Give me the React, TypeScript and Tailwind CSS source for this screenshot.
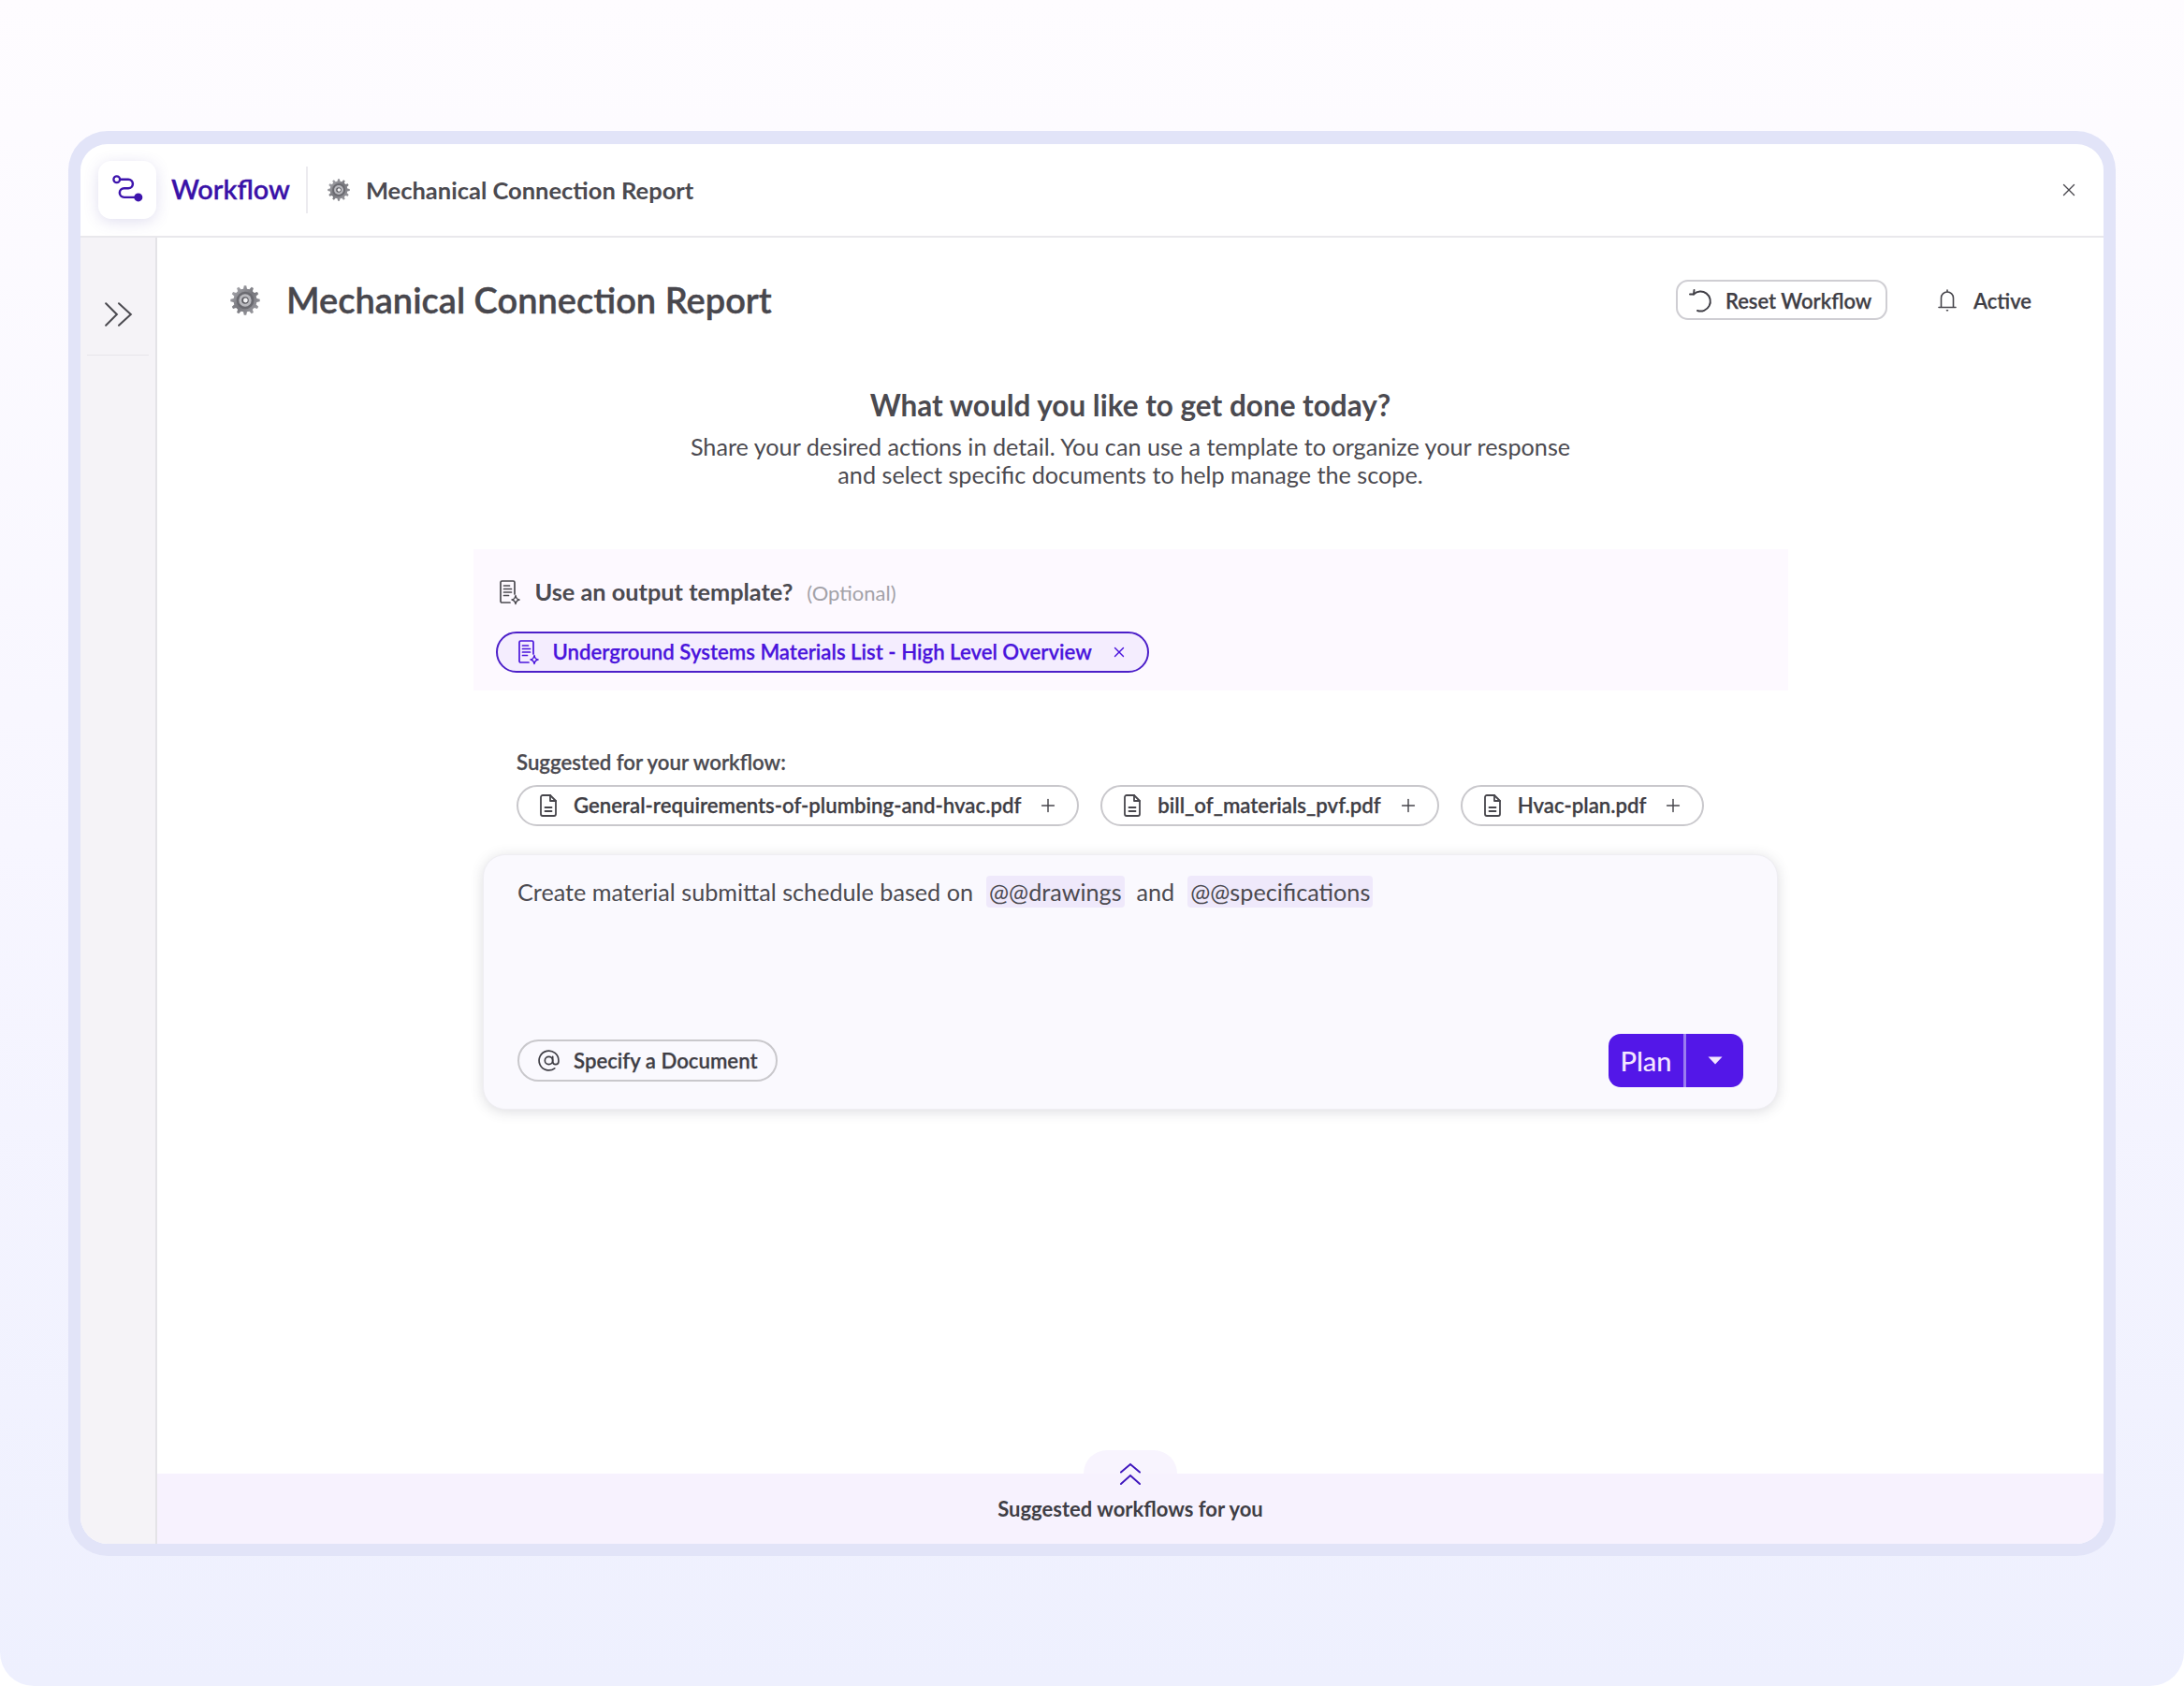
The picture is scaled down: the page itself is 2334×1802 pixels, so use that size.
import { AtSign, Plus, X } from "lucide-react";

// gear outline with 12 teeth, computed once
const gearPath = (() => {
    const pts: string[] = [];
    const teeth = 12;
    for (let i = 0; i < teeth; i++) {
        const a = (i / teeth) * Math.PI * 2;
        const step = (Math.PI * 2) / teeth;
        const corners: [number, number][] = [
            [9.4, a - step * 0.3],
            [11.8, a - step * 0.15],
            [11.8, a + step * 0.15],
            [9.4, a + step * 0.3],
        ];
        corners.forEach(([r, t]) => {
            pts.push(`${(12 + r * Math.cos(t)).toFixed(2)} ${(12 + r * Math.sin(t)).toFixed(2)}`);
        });
    }
    return "M" + pts.join("L") + "Z";
})();

function Gear({ className }: { className: string }) {
    return (
        <svg viewBox="0 0 24 24" className={className}>
            <defs>
                <linearGradient id="gearFill" x1="0" y1="0" x2="1" y2="1">
                    <stop offset="0" stopColor="#b4b4b9" />
                    <stop offset="0.5" stopColor="#77777d" />
                    <stop offset="1" stopColor="#a5a5aa" />
                </linearGradient>
            </defs>
            <path d={gearPath} fill="url(#gearFill)" />
            <circle cx="12" cy="12" r="7" fill="#6a6a70" />
            <circle cx="12" cy="12" r="5" fill="#b9b9be" />
            <circle cx="12" cy="12" r="2.800" fill="#5c5c62" />
            <circle cx="12.300" cy="12" r="1.800" fill="#f4f4f6" />
        </svg>
    );
}

function TemplateIcon({ className }: { className: string }) {
    return (
        <svg viewBox="0 0 24 28" fill="none" stroke="currentColor" strokeWidth="1.7" className={className}>
            <path d="M12 25H3.500A1.500 1.500 0 0 1 2 23.500V3.500A1.500 1.500 0 0 1 3.500 2h12A1.500 1.500 0 0 1 17 3.500V16" strokeLinecap="round" />
            <path d="M5.500 7h6M5.500 10.500h8M5.500 14h8M5.500 17.500h5" strokeLinecap="round" />
            <path d="M18 17.500c.5 3 1.500 4 4 4.500-2.500.5-3.500 1.500-4 4.500-.5-3-1.500-4-4-4.500 2.500-.5 3.500-1.500 4-4.500Z" strokeLinejoin="round" strokeWidth="1.500" />
        </svg>
    );
}

function DocIcon() {
    return (
        <svg viewBox="0 0 20 26" fill="none" stroke="#47464c" strokeWidth="1.800" strokeLinecap="round" strokeLinejoin="round" className="h-[26px] w-[20px] shrink-0">
            <path d="M12 2H4a2 2 0 0 0-2 2v18a2 2 0 0 0 2 2h12a2 2 0 0 0 2-2V8Z" />
            <path d="M12 2v6h6M6.500 15h7M6.500 19h7" />
        </svg>
    );
}

function DocChip({ name }: { name: string }) {
    return (
        <div className="flex h-[44px] items-center rounded-full border-2 border-[#c9c8cc] bg-white pl-[22px] pr-[20px] text-[22.200px] font-semibold text-[#3f3e45] [-webkit-text-stroke:0.25px_currentColor]">
            <DocIcon />
            <span className="ml-[17px]">{name}</span>
            <Plus className="ml-[18px] h-[22px] w-[22px] shrink-0 text-[#47464c]" strokeWidth={1.6} />
        </div>
    );
}

export default function App() {
    return (
        <div
            className="h-[1802px] w-[2334px] overflow-hidden rounded-b-[36px] bg-gradient-to-b from-[#fefcff] via-[#f7f6ff] to-[#eef0fe] px-[73px] pt-[140px]"
            style={{ fontFamily: "Lato, 'Noto Sans', sans-serif" }}
        >
            {/* frame */}
            <div className="flex h-[1523px] w-[2188px] flex-col overflow-hidden rounded-[42px] border-[13px] border-t-[14px] border-[#e2e4f8] bg-white">
                {/* top bar */}
                <header className="flex h-[100px] shrink-0 items-center border-b-2 border-[#e9e8ec] pl-[19px] pr-[26px]">
                    <div className="flex h-[62px] w-[62px] shrink-0 items-center justify-center rounded-[14px] bg-white shadow-[0_3px_16px_rgba(90,80,170,0.18)]">
                        <svg viewBox="0 0 32 32" fill="none" className="h-[36px] w-[36px] text-[#3d14ad]">
                            <circle cx="6" cy="6" r="3" stroke="currentColor" strokeWidth="2" />
                            <path d="M9 6h8a4.200 4.200 0 0 1 0 8.500h-4a4.200 4.200 0 0 0 0 8.500h11" stroke="currentColor" strokeWidth="2.200" />
                            <circle cx="26.500" cy="23" r="4" fill="currentColor" />
                        </svg>
                    </div>
                    <span className="ml-[16px] text-[28.800px] font-semibold text-[#3a12a8] [-webkit-text-stroke:0.3px_currentColor]">Workflow</span>
                    <div className="ml-[17px] h-[50px] w-[2px] bg-[#ecebef]" />
                    <Gear className="ml-[21px] h-[24px] w-[24px]" />
                    <span className="ml-[17px] text-[25.500px] font-bold text-[#4b4a50]">Mechanical Connection Report</span>
                    <X className="ml-auto h-[22px] w-[22px] text-[#4b4a50]" strokeWidth={1.5} />
                </header>

                <div className="flex min-h-0 flex-1">
                    {/* collapsed sidebar */}
                    <aside className="w-[80px] shrink-0 bg-[#f5f3f7] px-[7px] pt-[68px]">
                        <svg viewBox="0 0 30 26" fill="none" stroke="#4b4a50" strokeWidth="1.900" strokeLinecap="round" className="ml-[18px] h-[28px] w-[32px]">
                            <path d="M2 2l11 11L2 24M15 2l12 11-12 11" />
                        </svg>
                        <div className="mt-[29px] h-px bg-[#e7e5ea]" />
                    </aside>
                    <div className="w-[2px] shrink-0 bg-[#e4e3e7]" />

                    <main className="flex min-w-0 flex-1 flex-col">
                        {/* page title row */}
                        <div className="mt-[45px] flex h-[43px] items-center pl-[78px] pr-[77px]">
                            <Gear className="h-[32px] w-[32px]" />
                            <h1 className="ml-[28px] text-[38px] font-semibold text-[#48474d] [-webkit-text-stroke:0.4px_currentColor]">Mechanical Connection Report</h1>
                            <button className="ml-auto flex h-[43px] w-[226px] items-center rounded-[13px] border-2 border-[#cfced3] bg-white pl-[11px] text-[22px] font-semibold text-[#3f3e45] [-webkit-text-stroke:0.25px_currentColor]">
                                <svg viewBox="0 0 28 28" fill="none" stroke="currentColor" strokeWidth="1.900" strokeLinecap="round" strokeLinejoin="round" className="h-[28px] w-[28px]">
                                    <path d="M6 7.500A10.500 10.500 0 1 1 10 25" />
                                    <path d="M2 7.500 6 7.500 6.500 3" />
                                </svg>
                                <span className="ml-[12px] pt-[2px]">Reset Workflow</span>
                            </button>
                            <svg viewBox="0 0 20 24" fill="none" stroke="#47464c" strokeWidth="1.600" strokeLinecap="round" className="ml-[54px] h-[24px] w-[20px]">
                                <path d="M1 19.500h18M3.500 19.500V9.500a6.500 6.500 0 0 1 13 0v10M10 1v2M9.500 22.800h1" />
                            </svg>
                            <span className="ml-[18px] pt-[2px] text-[22px] font-semibold text-[#3f3e45] [-webkit-text-stroke:0.25px_currentColor]">Active</span>
                        </div>

                        {/* intro */}
                        <div className="mt-[71px] flex flex-col items-center text-center">
                            <h2 className="text-[31.500px] leading-[40px] font-bold text-[#4b4a50]">What would you like to get done today?</h2>
                            <p className="mt-[9px] text-[25.200px] leading-[30px] text-[#4b4a50]">
                                Share your desired actions in detail. You can use a template to organize your response
                                <br />
                                and select specific documents to help manage the scope.
                            </p>
                        </div>

                        {/* output template */}
                        <section className="mx-auto mt-[65px] h-[151px] w-[1405px] shrink-0 bg-[#fdf9ff] pl-[24px] pt-[29px]">
                            <div className="flex h-[34px] items-center pl-[3px]">
                                <TemplateIcon className="h-[28px] w-[24px] shrink-0 text-[#4b4a50]" />
                                <span className="ml-[15px] text-[25.300px] font-bold text-[#4b4a50]">Use an output template?</span>
                                <span className="ml-[15px] text-[22px] text-[#a3a2a8]">(Optional)</span>
                            </div>
                            <div className="mt-[25px] flex h-[44px] w-[698px] items-center rounded-full border-2 border-[#4c1fc9] bg-[#f4edfe] pl-[21px] text-[#4a14dc]">
                                <TemplateIcon className="h-[28px] w-[24px] shrink-0" />
                                <span className="ml-[14px] text-[22.200px] font-semibold whitespace-nowrap [-webkit-text-stroke:0.25px_currentColor]">Underground Systems Materials List - High Level Overview</span>
                                <X className="ml-[20px] h-[18px] w-[18px] shrink-0" strokeWidth={1.8} />
                            </div>
                        </section>

                        {/* suggestions + prompt */}
                        <div className="mx-auto w-[1384px]">
                            <div className="mt-[63px] px-[36px]">
                                <p className="text-[22.200px] leading-[28px] font-semibold text-[#4b4a50] [-webkit-text-stroke:0.25px_currentColor]">Suggested for your workflow:</p>
                                <div className="mt-[10px] flex gap-[23px]">
                                    <DocChip name="General-requirements-of-plumbing-and-hvac.pdf" />
                                    <DocChip name="bill_of_materials_pvf.pdf" />
                                    <DocChip name="Hvac-plan.pdf" />
                                </div>
                            </div>
                            <div className="mt-[30px] flex h-[273px] flex-col rounded-[24px] border border-[#efeef3] bg-[#faf9fe] px-[36px] pt-[22px] pb-[23px] shadow-[0_2px_14px_rgba(60,60,80,0.18)]">
                                <div className="flex items-center text-[25.200px] leading-[34px] text-[#4b4a50]">
                                    <span>Create material submittal schedule based on</span>
                                    <span className="ml-[14px] rounded-[4px] bg-[#efe9fb] px-[3px]">@@drawings</span>
                                    <span className="ml-[13px]">and</span>
                                    <span className="ml-[14px] rounded-[4px] bg-[#efe9fb] px-[3px]">@@specifications</span>
                                </div>
                                <div className="mt-auto flex items-end justify-between">
                                    <button className="mb-[6px] flex h-[45px] w-[278px] items-center rounded-full border-2 border-[#c9c8cc] pl-[19px] text-[22.200px] font-semibold text-[#3f3e45] [-webkit-text-stroke:0.25px_currentColor]">
                                        <AtSign className="h-[25px] w-[25px]" strokeWidth={1.6} />
                                        <span className="ml-[14px]">Specify a Document</span>
                                    </button>
                                    <div className="flex h-[57px] w-[144px] overflow-hidden rounded-[13px] bg-[#5317e8] text-[#f3e6ff]">
                                        <span className="flex w-[80px] items-center justify-center text-[29px] font-medium">Plan</span>
                                        <span className="w-[3px] bg-[#9a7cf0]" />
                                        <span className="flex flex-1 items-center justify-center">
                                            <svg viewBox="0 0 16 9" className="h-[9px] w-[16px]" fill="currentColor">
                                                <path d="M0.500 0.500h15L8 8.500Z" />
                                            </svg>
                                        </span>
                                    </div>
                                </div>
                            </div>
                        </div>

                        {/* suggested workflows drawer */}
                        <footer className="relative mt-auto flex h-[75px] shrink-0 items-end justify-center bg-[#f7f2fe] pb-[23px]">
                            <div className="absolute -top-[25px] left-1/2 h-[25px] w-[100px] -translate-x-1/2 rounded-t-[28px] bg-[#f8f4fe]" />
                            <svg viewBox="0 0 24 26" fill="none" stroke="#3f16bd" strokeWidth="2" strokeLinecap="round" className="absolute -top-[12px] left-1/2 h-[25px] w-[23px] -translate-x-1/2">
                                <path d="M1.500 11 12 2l10.500 9M1.500 24 12 14.500 22.500 24" />
                            </svg>
                            <span className="text-[22px] leading-[28px] font-bold text-[#3f3e45]">Suggested workflows for you</span>
                        </footer>
                    </main>
                </div>
            </div>
        </div>
    );
}
